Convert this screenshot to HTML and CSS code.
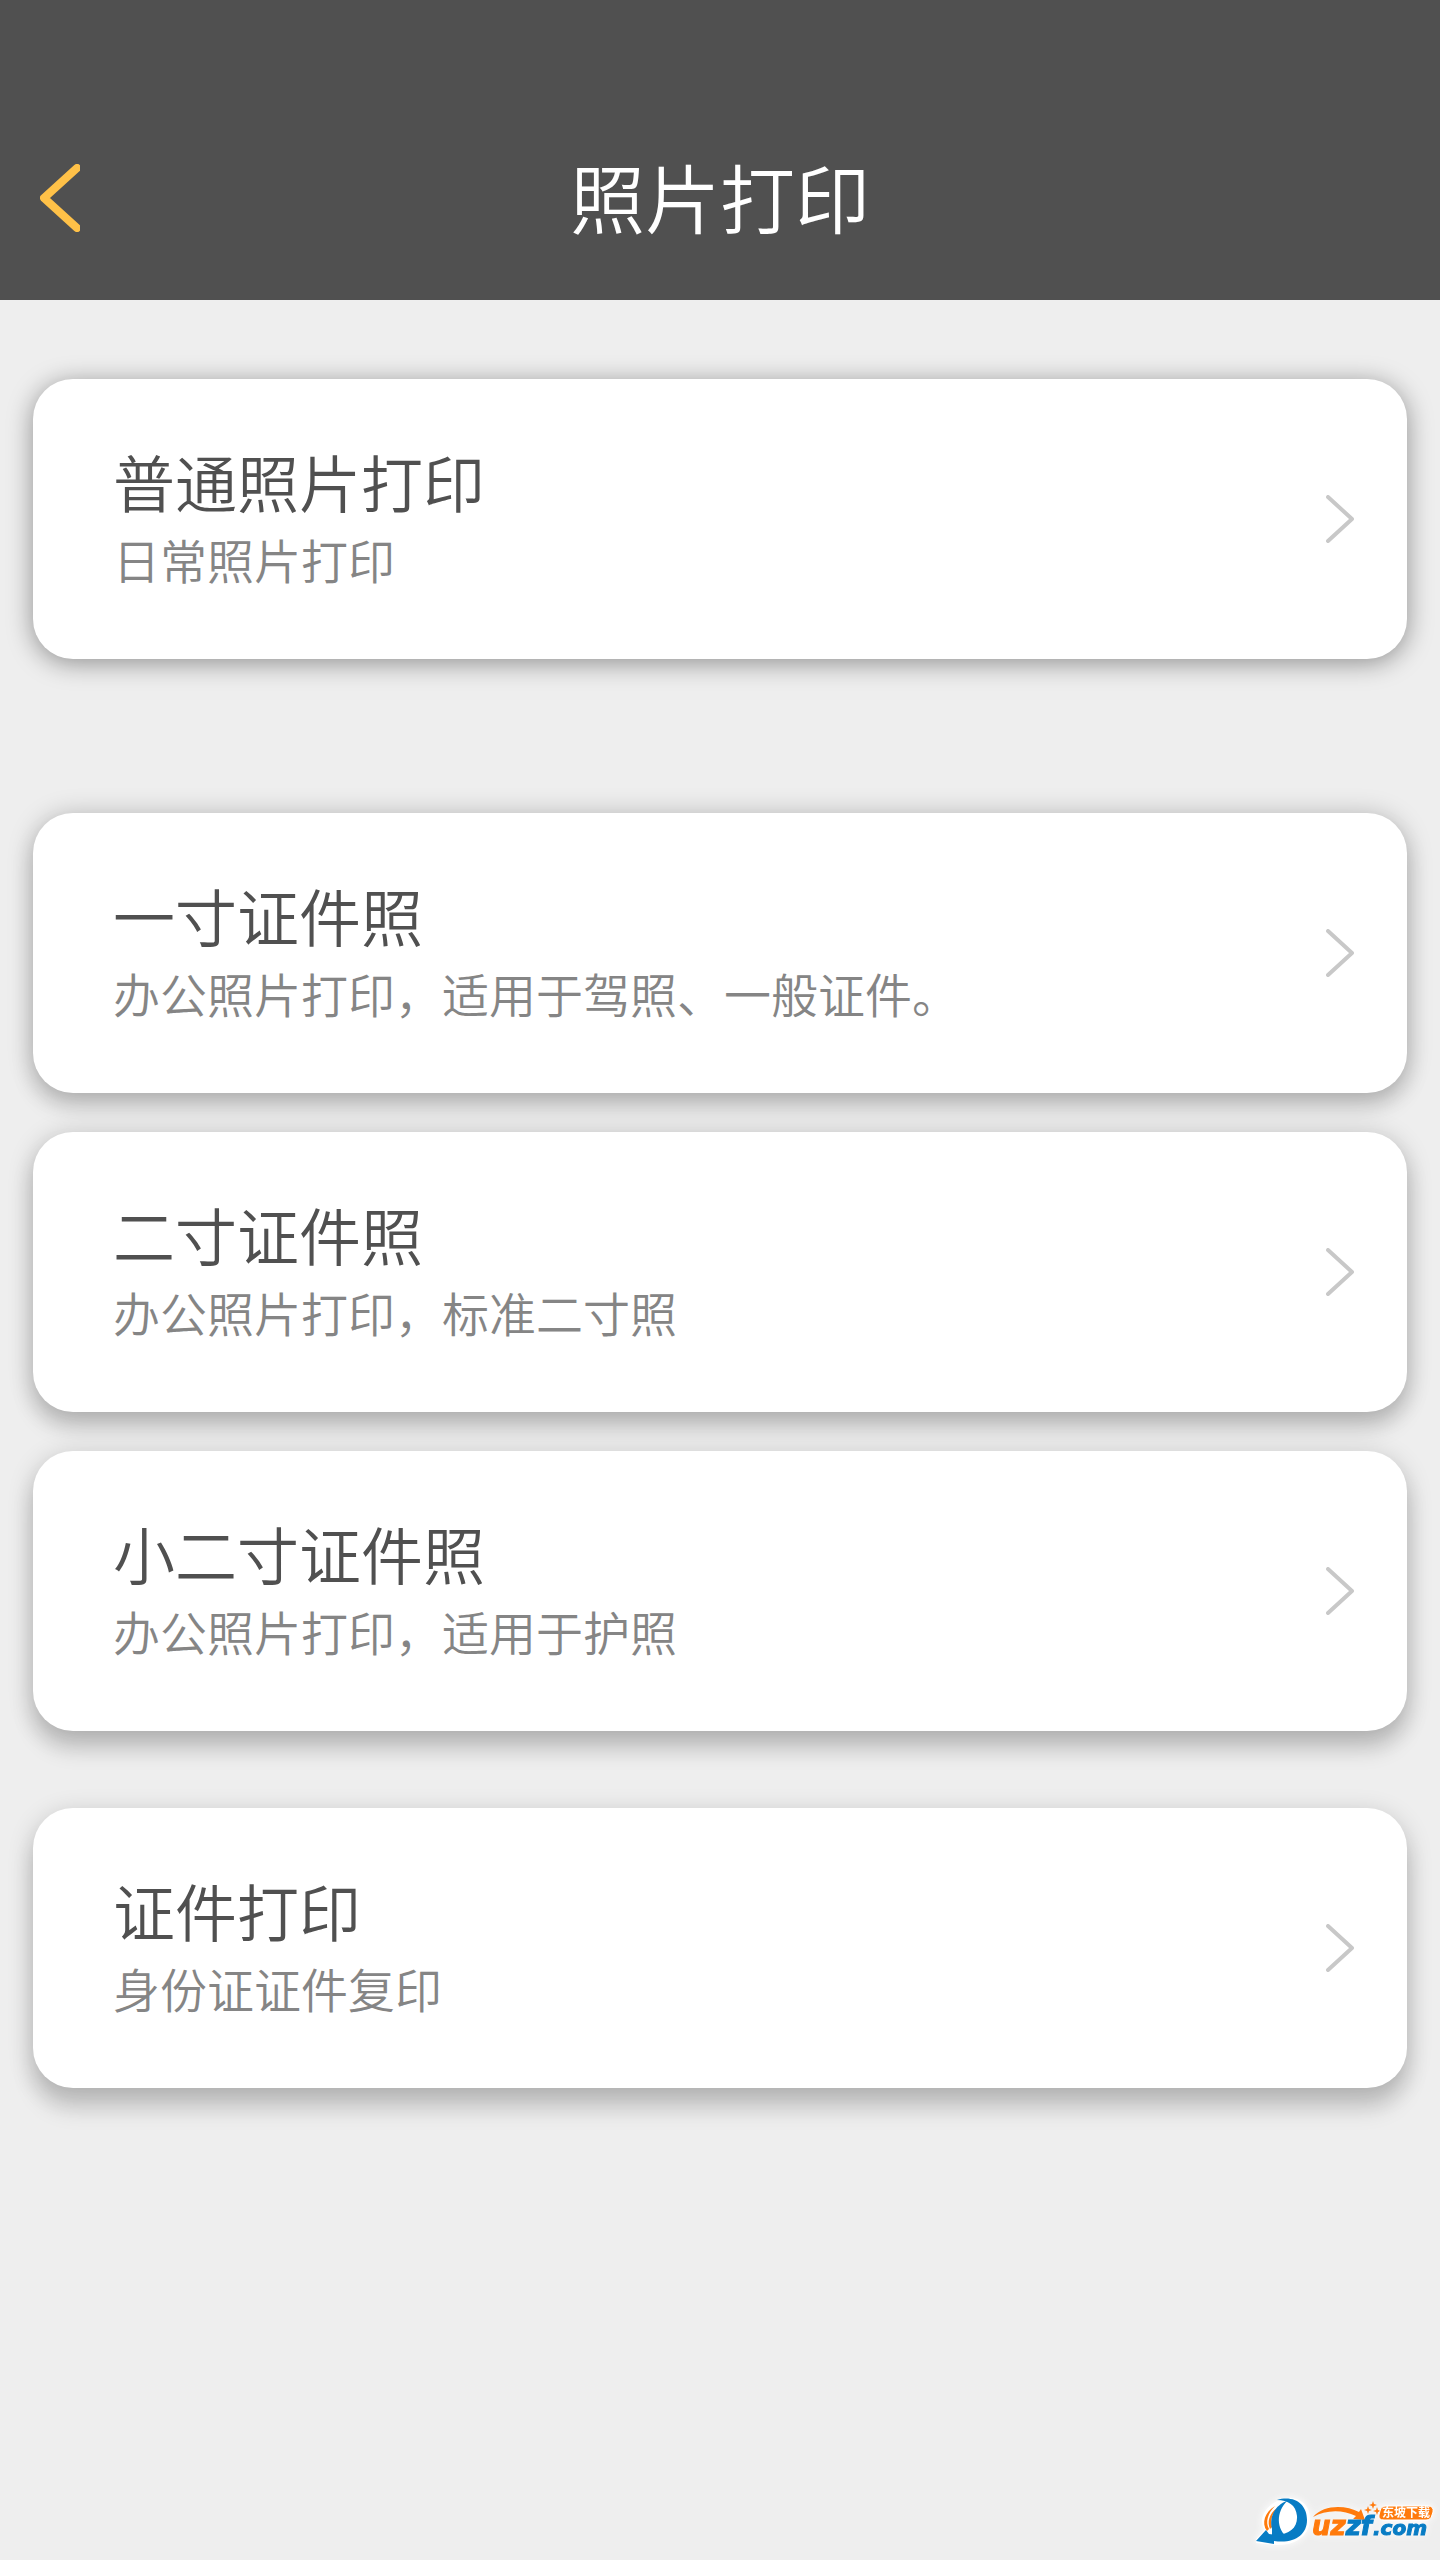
FILE: index.html
```html
<!DOCTYPE html>
<html lang="zh-CN">
<head>
    <meta charset="UTF-8">
    <meta name="viewport" content="width=device-width, initial-scale=1.0">
    <title>照片打印</title>
    <link rel="stylesheet" href="styles.css">
</head>
<body>
    <header class="top-bar">
        <button class="back-button" type="button" aria-label="返回">
            <svg class="back-icon" viewBox="0 0 40 68"><path d="M37 4 L4 34 L37 64"/></svg>
        </button>
        <h1 class="page-title">照片打印</h1>
    </header>

    <main class="menu">
        <section class="menu-group">
            <a class="card level-1" href="#photo">
                <span class="card-text">
                    <span class="card-title">普通照片打印</span>
                    <span class="card-desc">日常照片打印</span>
                </span>
                <svg class="arrow" viewBox="0 0 28 48"><path d="M2 2 L26 24 L2 46"/></svg>
            </a>
        </section>

        <section class="menu-group id-photos">
            <a class="card level-2" href="#one-inch">
                <span class="card-text">
                    <span class="card-title">一寸证件照</span>
                    <span class="card-desc">办公照片打印，适用于驾照、一般证件。</span>
                </span>
                <svg class="arrow" viewBox="0 0 28 48"><path d="M2 2 L26 24 L2 46"/></svg>
            </a>
            <a class="card level-3" href="#two-inch">
                <span class="card-text">
                    <span class="card-title">二寸证件照</span>
                    <span class="card-desc">办公照片打印，标准二寸照</span>
                </span>
                <svg class="arrow" viewBox="0 0 28 48"><path d="M2 2 L26 24 L2 46"/></svg>
            </a>
            <a class="card level-4" href="#small-two-inch">
                <span class="card-text">
                    <span class="card-title">小二寸证件照</span>
                    <span class="card-desc">办公照片打印，适用于护照</span>
                </span>
                <svg class="arrow" viewBox="0 0 28 48"><path d="M2 2 L26 24 L2 46"/></svg>
            </a>
        </section>

        <section class="menu-group documents">
            <a class="card level-5" href="#documents">
                <span class="card-text">
                    <span class="card-title">证件打印</span>
                    <span class="card-desc">身份证证件复印</span>
                </span>
                <svg class="arrow" viewBox="0 0 28 48"><path d="M2 2 L26 24 L2 46"/></svg>
            </a>
        </section>
    </main>

    <svg class="watermark" viewBox="0 0 184 64" role="img" aria-label="uzzf.com 东坡下载">
        <path class="halo" d="M20 8 C32 -1 52 4 52 24 C51 40 38 47 20 47 L1 45 L11 34 C4 24 10 14 20 8 Z"/>
        <path class="orange" d="M19 10 C9 16 5 27 11 35 L13 33 C9 26 12 17 19 10 Z"/>
        <path class="orange" d="M21 12 C13 18 11 26 14 33 L16 31 C14 25 16 18 21 12 Z"/>
        <path class="blue" d="M21 4 C38 -1 51 8 51 24 C51 39 38 48 18 45 L18 48 L0 45 L10 34 L13 38 C30 41 42 34 41 20 C40 9 32 4 21 4 Z"/>
        <path class="blue" d="M31 5 C19 9 13 21 16 33 L16 39 L32 42 C20 33 20 16 31 5 Z"/>
        <path class="orange" d="M57 21 C68 8 90 9 103 16 L105 13 L109 24 L97 23 L100 20 C86 13 69 14 57 21 Z"/>
        <path class="orange" d="M112 10 l1 3 3 1 -3 1 -1 3 -1 -3 -3 -1 3 -1 Z M117 5 l1 3 3 1 -3 1 -1 3 -1 -3 -3 -1 3 -1 Z M121 11 l1 3 3 1 -3 1 -1 3 -1 -3 -3 -1 3 -1 Z"/>
        <text class="logo-name" x="56" y="39"><tspan class="orange">uz</tspan><tspan class="blue">zf</tspan></text>
        <text class="logo-name logo-domain" x="117" y="39"><tspan class="blue">.com</tspan></text>
        <path class="tag" d="M130 10 H172 Q178 10 177 16 L176 19 Q175 24 170 24 H128 Q122 24 123 19 L124 15 Q125 10 130 10 Z"/>
        <text class="logo-tag" x="126" y="21">东坡下载</text>
    </svg>
</body>
</html>
```

FILE: styles.css
```css
* {
    box-sizing: border-box;
}

body {
    margin: 0;
    min-height: 100vh;
    background-color: #eeeeee;
    font-family: "Noto Sans CJK SC", "Noto Sans", sans-serif;
    font-weight: 350;
}

.top-bar {
    display: grid;
    grid-template-columns: 120px 1fr 120px;
    align-items: start;
    padding: 144px 0 52px;
    background-color: #505050;
}

.back-button {
    display: flex;
    padding: 20px 40px 16px;
    border: none;
    background: none;
    cursor: pointer;
}

.back-icon {
    width: 40px;
    height: 68px;
    fill: none;
    stroke: #ffc148;
    stroke-width: 8;
    stroke-linecap: round;
    stroke-linejoin: round;
}

.page-title {
    margin: 0;
    color: #fff;
    font-size: 75px;
    font-weight: 350;
    line-height: 104px;
    text-align: center;
}

.menu {
    padding: 79px 33px;
}

.menu-group {
    display: flex;
    flex-direction: column;
    gap: 39px;
}

.id-photos {
    margin-top: 154px;
}

.documents {
    margin-top: 77px;
}

.card {
    display: flex;
    align-items: center;
    justify-content: space-between;
    padding: 57px 53px 57px 80px;
    border-radius: 40px;
    background-color: #fff;
    text-decoration: none;
}

/* the shadow falls lower the further down the card sits */
.level-1 { box-shadow: 0 4px 26px rgba(0, 0, 0, 0.4); }
.level-2 { box-shadow: 0 1px 26px rgba(0, 0, 0, 0.22), 0 14px 22px rgba(0, 0, 0, 0.15); }
.level-3 { box-shadow: 0 3px 26px rgba(0, 0, 0, 0.2), 0 16px 22px rgba(0, 0, 0, 0.15); }
.level-4 { box-shadow: 0 5px 26px rgba(0, 0, 0, 0.19), 0 19px 22px rgba(0, 0, 0, 0.14); }
.level-5 { box-shadow: 0 6px 26px rgba(0, 0, 0, 0.19), 0 22px 22px rgba(0, 0, 0, 0.13); }

.card-text {
    display: flex;
    flex-direction: column;
    padding-bottom: 10px;
}

.card-title {
    color: #505050;
    font-size: 62px;
    line-height: 90px;
}

.card-desc {
    color: #858585;
    font-size: 47px;
    line-height: 66px;
}

.arrow {
    flex: none;
    width: 28px;
    height: 48px;
    fill: none;
    stroke: #c8c8c8;
    stroke-width: 4;
    stroke-linecap: round;
    stroke-linejoin: round;
}

.watermark {
    position: fixed;
    right: 0;
    bottom: 0;
    width: 184px;
    height: 64px;
    filter: drop-shadow(0 0 4px #fff);
}

.halo {
    fill: #fff;
    stroke: #fff;
    stroke-width: 4;
    stroke-linejoin: round;
}

.orange { fill: #ff7a0c; }
.blue { fill: #087cc4; }

.logo-name {
    font-family: "DejaVu Sans", sans-serif;
    font-size: 26px;
    font-weight: 700;
    font-style: italic;
    stroke-width: 1;
}

.logo-name .orange { stroke: #ff7a0c; }
.logo-name .blue { stroke: #087cc4; }

.logo-domain {
    font-size: 20px;
}

.tag {
    fill: #ff7a0c;
    stroke: #fff;
    stroke-width: 1;
}

.logo-tag {
    fill: #fff;
    font-size: 12px;
    font-weight: 700;
}
```
